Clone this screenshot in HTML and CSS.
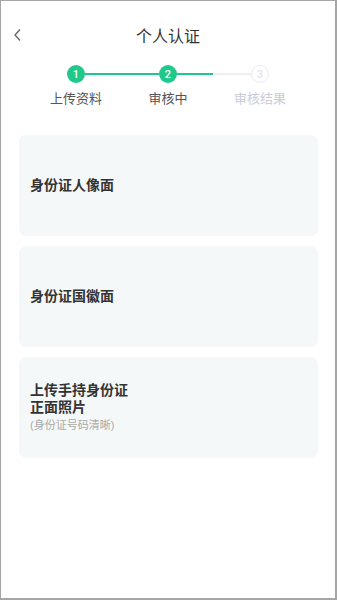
FILE: index.html
```html
<html>
<head>
    <meta charset="utf-8">
    <title>个人认证</title>
    <link rel="stylesheet" href="styles.css">
</head>
<body>
    <div class="page">
        <div class="header">
            <span class="back">
                <svg width="10" height="14" viewBox="0 0 10 14"><polyline points="7,1.5 2,7 7,12.5" fill="none" stroke="#666" stroke-width="1.4"/></svg>
            </span>
            <div class="title">个人认证</div>
        </div>

        <div class="steps">
            <div class="track">
                <span class="dot done">1</span>
                <span class="line done"></span>
                <span class="dot done">2</span>
                <span class="line half"></span>
                <span class="dot todo">3</span>
            </div>
            <div class="labels">
                <span class="label">上传资料</span>
                <span class="label">审核中</span>
                <span class="label todo">审核结果</span>
            </div>
        </div>

        <div class="cards">
            <div class="card">
                <div class="card-title">身份证人像面</div>
            </div>
            <div class="card">
                <div class="card-title">身份证国徽面</div>
            </div>
            <div class="card">
                <div class="card-title">上传手持身份证</div>
                <div class="card-title">正面照片</div>
                <div class="card-tip">(身份证号码清晰)</div>
            </div>
        </div>
    </div>
</body>
</html>
```

FILE: styles.css
```css
* {
    margin: 0px;
    padding: 0px;
    box-sizing: border-box;
}

body
{
    background: #ffffff;
    font-family: "Noto Sans CJK SC", "Noto Sans", sans-serif;
}

.page
{
    width: 337px;
    height: 600px;
    border-style: solid;
    border-color: #a6a6a6;
    border-width: 1px 2px 2px 1px;
    background: #ffffff;
}

.header
{
    display: flex;
    align-items: center;
    height: 54px;
    margin-top: 7px;
    padding-left: 12px;
}

.back
{
    display: flex;
    width: 10px;
}

.title
{
    flex: 1;
    text-align: center;
    font-size: 16px;
    color: #333333;
    margin-right: 22px;
}

.steps
{
    padding-left: 29px;
}

.track
{
    display: flex;
    align-items: center;
    width: 202px;
    margin-left: 37px;
    margin-top: 3px;
}

.dot
{
    width: 18px;
    height: 18px;
    border-radius: 50%;
    display: flex;
    align-items: center;
    justify-content: center;
    font-family: Roboto, sans-serif;
    font-size: 11px;
    font-weight: 500;
}

.dot.done
{
    background: #1ec98b;
    color: #ffffff;
}

.dot.todo
{
    border: 1.5px solid #ececf2;
    color: #e6e6ee;
}

.line
{
    flex: 1;
    height: 2px;
}

.line.done
{
    background: #1ec98b;
}

.line.half
{
    background: linear-gradient(to right, #1ec98b 49%, #eeeef3 49%);
}

.labels
{
    display: grid;
    grid-template-columns: 92px 92px 92px;
    margin-top: 6px;
}

.label
{
    text-align: center;
    font-size: 13px;
    color: #555555;
    line-height: 18px;
}

.label.todo
{
    color: #c9cbd9;
}

.cards
{
    display: flex;
    flex-direction: column;
    gap: 10px;
    padding-left: 18px;
    padding-right: 17px;
    margin-top: 28px;
}

.card
{
    height: 101px;
    background: #f5f8f8;
    border-radius: 7px;
    padding-left: 11px;
    display: flex;
    flex-direction: column;
    justify-content: center;
}

.card-title
{
    font-family: "Liberation Sans", "Noto Sans CJK SC", sans-serif;
    font-size: 14px;
    font-weight: bold;
    color: #333333;
    line-height: 17px;
}

.card-tip
{
    font-family: "Liberation Sans", "Noto Sans CJK SC", sans-serif;
    font-size: 11px;
    color: #aaaaaa;
    line-height: 16px;
    margin-top: 1px;
}
```
